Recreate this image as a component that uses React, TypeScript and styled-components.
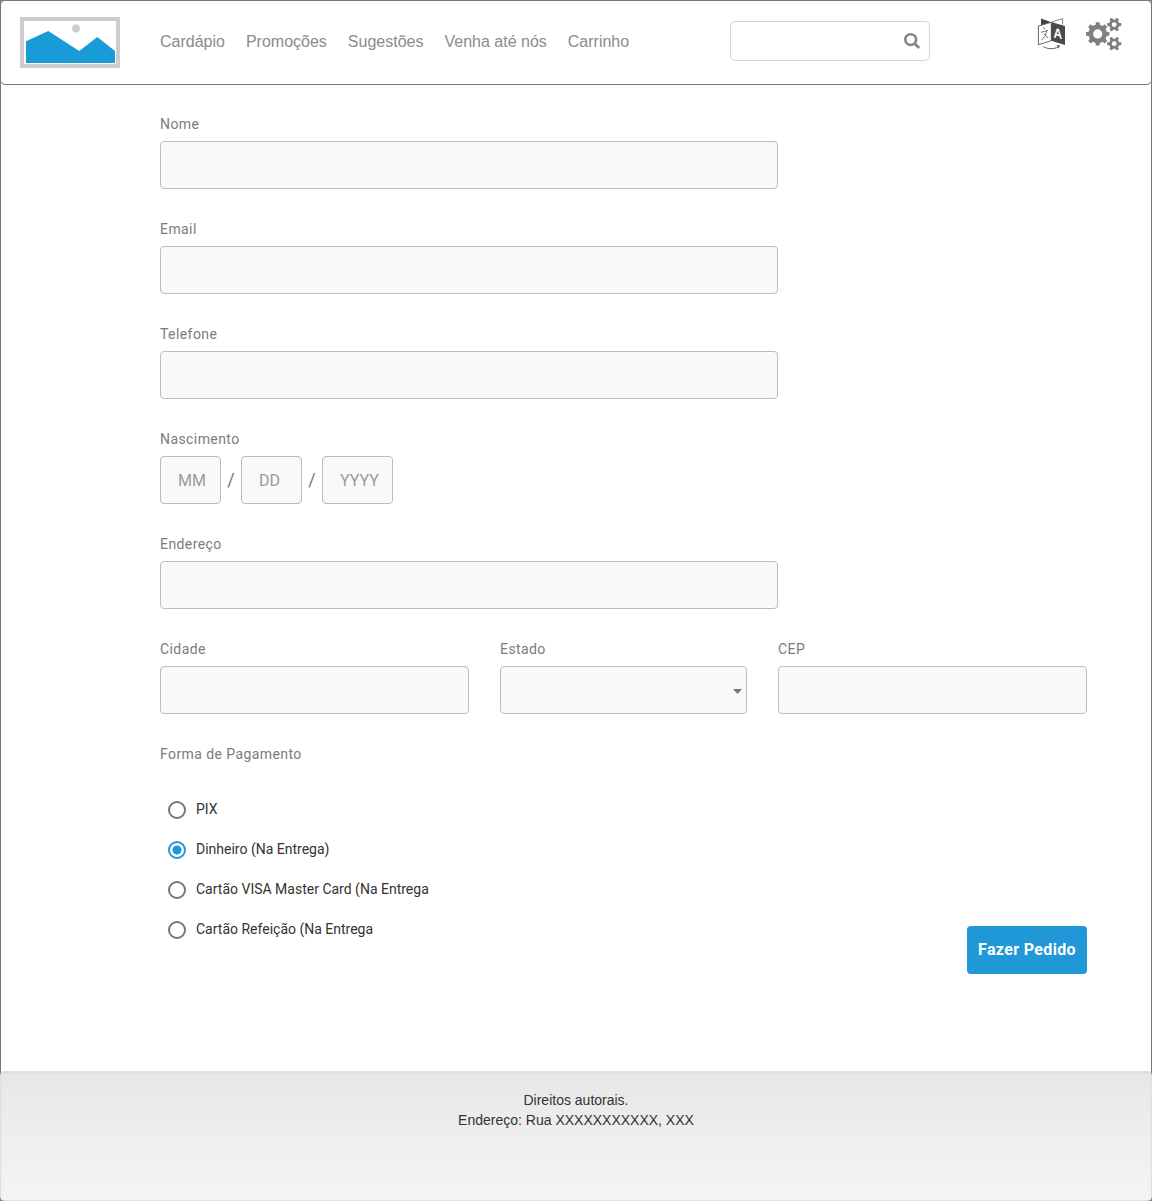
import React, { useState } from 'react';
import styled, { createGlobalStyle } from 'styled-components';

const GlobalStyle = createGlobalStyle`
  *, *::before, *::after { box-sizing: border-box; }
  body { margin: 0; background: #fff; }
`;

const sans = `"Liberation Sans", Arial, sans-serif`;
const roboto = `Roboto, "Liberation Sans", sans-serif`;

const Page = styled.div`
  width: 1152px;
  height: 1201px;
  display: flex;
  flex-direction: column;
  border: 1px solid #777;
  background: #fff;
  font-family: ${roboto};
`;

const Header = styled.header`
  flex: none;
  height: 85px;
  margin: -1px -1px 0;
  padding: 0 29px 0 20px;
  display: flex;
  align-items: flex-start;
  border: 1px solid #777;
  border-radius: 5px;
  background: #fff;
`;

const Logo = styled.svg`
  display: block;
  flex: none;
  margin: 16px 40px 0 -1px;
`;

const Nav = styled.nav`
  display: flex;
  gap: 21px;
  width: 570px;
  padding-top: 31px;
`;

const NavLink = styled.a`
  font: 16px/20px ${sans};
  color: #8b8b8b;
  white-space: nowrap;
  text-decoration: none;
`;

const SearchBox = styled.label`
  display: flex;
  align-items: center;
  width: 200px;
  height: 40px;
  margin-top: 20px;
  padding-right: 8px;
  border: 1px solid #d4d4d4;
  border-radius: 5px;
`;

const SearchInput = styled.input`
  flex: 1;
  min-width: 0;
  border: 0;
  outline: 0;
  padding: 0 10px;
  background: transparent;
  font: 16px ${sans};
`;

const Tools = styled.div`
  display: flex;
  gap: 19px;
  margin: 14px 0 0 auto;
  svg { display: block; }
`;

const Form = styled.form`
  flex: 1;
  display: flex;
  flex-direction: column;
  gap: 31px;
  padding: 30px 64px 0 159px;
`;

const Field = styled.div<{ $width: number }>`
  width: ${(p) => p.$width}px;
`;

const Label = styled.div`
  height: 26px;
  font-size: 14px;
  line-height: 18px;
  letter-spacing: 0.42px;
  color: #7b7b7b;
  white-space: nowrap;
`;

const Input = styled.input<{ $width?: number }>`
  display: block;
  width: ${(p) => (p.$width ? `${p.$width}px` : '100%')};
  height: 48px;
  padding: 0 0 0 17px;
  border: 1px solid #bdbdbd;
  border-radius: 4px;
  outline: 0;
  background: #f9f9f9;
  font: 16px ${roboto};
  color: #333;
  &::placeholder { color: #999; opacity: 1; }
`;

const SelectBox = styled.button`
  display: flex;
  align-items: center;
  justify-content: flex-end;
  width: 100%;
  height: 48px;
  padding: 2px 4px 0 0;
  border: 1px solid #bdbdbd;
  border-radius: 4px;
  background: #f9f9f9;
`;

const DateRow = styled.div`
  display: flex;
  align-items: center;
`;

const Slash = styled.span`
  width: 20px;
  padding-bottom: 2px;
  text-align: center;
  font-size: 18px;
  color: #777;
`;

const Columns = styled.div`
  display: flex;
  gap: 31px;
`;

const Bottom = styled.div`
  display: flex;
  justify-content: space-between;
  align-items: flex-end;
  height: 184px;
  margin-top: -12px;
`;

const Options = styled.div`
  align-self: flex-start;
`;

const Option = styled.label`
  display: flex;
  align-items: center;
  gap: 10px;
  height: 40px;
  padding-left: 8px;
  font-size: 14px;
  color: #333;
`;

const OptionText = styled.span`
  line-height: 18px;
  padding-bottom: 2px;
`;

const Radio = styled.input`
  appearance: none;
  width: 18px;
  height: 18px;
  margin: 0;
  border: 2px solid #777;
  border-radius: 50%;
  &:checked {
    border-color: #2098d8;
    background: radial-gradient(circle at center, #2098d8 4.1px, transparent 4.9px);
  }
`;

const Submit = styled.button`
  width: 120px;
  height: 48px;
  padding: 0 0 2px;
  border: 0;
  border-radius: 4px;
  background: #2098d8;
  color: #fff;
  font: 700 16px ${roboto};
  letter-spacing: 0.35px;
  white-space: nowrap;
`;

const Footer = styled.footer`
  flex: none;
  height: 130px;
  margin: 0 -1px -1px;
  padding-top: 18px;
  border: 1px solid #dfdfdf;
  border-radius: 4px;
  background: linear-gradient(#e7e7e7, #f5f5f5);
  box-shadow: inset 0 1px 3px rgba(0, 0, 0, 0.05);
  text-align: center;
  font: 14px/20px ${sans};
  color: #333;
`;

const gear = (cx: number, cy: number, teeth: number, outer: number, inner: number, start = 0) => {
  const step = (Math.PI * 2) / teeth;
  const points: string[] = [];
  for (let i = 0; i < teeth; i++) {
    const a = start + i * step;
    [
      [inner, -0.29],
      [outer, -0.2],
      [outer, 0.2],
      [inner, 0.29],
    ].forEach(([r, k]) => {
      points.push(`${(cx + r * Math.cos(a + k * step)).toFixed(2)} ${(cy + r * Math.sin(a + k * step)).toFixed(2)}`);
    });
  }
  return `M${points.join('L')}Z`;
};

const hole = (cx: number, cy: number, r: number) =>
  `M${cx - r} ${cy}a${r} ${r} 0 1 0 ${r * 2} 0a${r} ${r} 0 1 0 ${-r * 2} 0Z`;

const GearsIcon = () => (
  <svg width="36" height="36" viewBox="0 0 36 36" fill="#7f7f7f" fillRule="evenodd">
    <path d={gear(11.7, 18.9, 8, 11.8, 9.3) + hole(11.7, 18.9, 4.6)} />
    <path d={gear(28.2, 9.6, 6, 7.2, 5.2) + hole(28.2, 9.6, 2.4)} />
    <path d={gear(28.2, 28.7, 6, 7.2, 5.2) + hole(28.2, 28.7, 2.4)} />
  </svg>
);

const TranslateIcon = () => (
  <svg width="30" height="36" viewBox="0 0 30 36">
    <path d="M4 3.5L14.3 7.3L4 10.3Z" fill="#444" />
    <path d="M14.3 7.3L25.6 3.5V9.5" fill="none" stroke="#777" strokeWidth="0.9" />
    <path d="M1.4 11L14.3 7.3V25.7L1.4 29.7Z" fill="#fff" stroke="#555" strokeWidth="0.9" />
    <path d="M14.2 7.1L28 11V30L14.2 25.7Z" fill="#4a4a4a" />
    <path
      d="M6.2 12.6L8 14M4 17.3L11 15.3M9.8 15.8C9 20 7.2 23 4.2 25M6.7 18.5L11.3 23.2"
      fill="none"
      stroke="#666"
      strokeWidth="0.9"
    />
    <text x="0" y="0" transform="matrix(.86 .16 0 1 16.4 22.6)" fill="#fff" fontFamily="Liberation Sans, Arial, sans-serif" fontWeight="700" fontSize="14">
      A
    </text>
    <path d="M6.3 31.5C11 34.3 17 34.5 21.5 31.7" fill="none" stroke="#555" strokeWidth="0.9" />
    <path d="M19.5 30.3L23 30.3L21.6 33.4Z" fill="#555" />
  </svg>
);

const links = ['Cardápio', 'Promoções', 'Sugestões', 'Venha até nós', 'Carrinho'];
const payments = ['PIX', 'Dinheiro (Na Entrega)', 'Cartão VISA Master Card (Na Entrega', 'Cartão Refeição (Na Entrega'];

const TextField = ({ label, width }: { label: string; width: number }) => (
  <Field $width={width}>
    <Label>{label}</Label>
    <Input aria-label={label} />
  </Field>
);

export default function App() {
  const [payment, setPayment] = useState(payments[1]);
  return (
    <>
      <GlobalStyle />
      <Page>
        <Header>
          <Logo width="100" height="51" viewBox="0 0 100 51">
            <rect x="2" y="2" width="96" height="47" fill="#fff" stroke="#ccc" strokeWidth="4" />
            <path d="M6 24.3L28.3 14L59.3 34L77.3 20L95 34V46H6Z" fill="#199bd7" />
            <circle cx="56" cy="11.5" r="3.9" fill="#ccc" />
          </Logo>
          <Nav>
            {links.map((link) => (
              <NavLink key={link}>{link}</NavLink>
            ))}
          </Nav>
          <SearchBox>
            <SearchInput aria-label="Buscar" />
            <svg width="18" height="18" viewBox="0 0 18 18" fill="none" stroke="#858585" strokeWidth="2.6">
              <circle cx="7.7" cy="7.6" r="5.4" />
              <path d="M11.9 11.8L15.4 15.3" strokeLinecap="round" strokeWidth="2.8" />
            </svg>
          </SearchBox>
          <Tools>
            <TranslateIcon />
            <GearsIcon />
          </Tools>
        </Header>
        <Form onSubmit={(e) => e.preventDefault()}>
          <TextField label="Nome" width={618} />
          <TextField label="Email" width={618} />
          <TextField label="Telefone" width={618} />
          <Field $width={618}>
            <Label>Nascimento</Label>
            <DateRow>
              <Input $width={61} placeholder="MM" />
              <Slash>/</Slash>
              <Input $width={61} placeholder="DD" />
              <Slash>/</Slash>
              <Input $width={71} placeholder="YYYY" />
            </DateRow>
          </Field>
          <TextField label="Endereço" width={618} />
          <Columns>
            <TextField label="Cidade" width={309} />
            <Field $width={247}>
              <Label>Estado</Label>
              <SelectBox type="button" aria-label="Estado">
                <svg width="9" height="5" viewBox="0 0 9 5">
                  <path d="M0 0H9L4.5 5Z" fill="#777" />
                </svg>
              </SelectBox>
            </Field>
            <TextField label="CEP" width={309} />
          </Columns>
          <Label>Forma de Pagamento</Label>
          <Bottom>
            <Options>
              {payments.map((p) => (
                <Option key={p}>
                  <Radio type="radio" name="payment" checked={p === payment} onChange={() => setPayment(p)} />
                  <OptionText>{p}</OptionText>
                </Option>
              ))}
            </Options>
            <Submit>Fazer Pedido</Submit>
          </Bottom>
        </Form>
        <Footer>
          Direitos autorais.
          <br />
          Endereço: Rua XXXXXXXXXXX, XXX
        </Footer>
      </Page>
    </>
  );
}
